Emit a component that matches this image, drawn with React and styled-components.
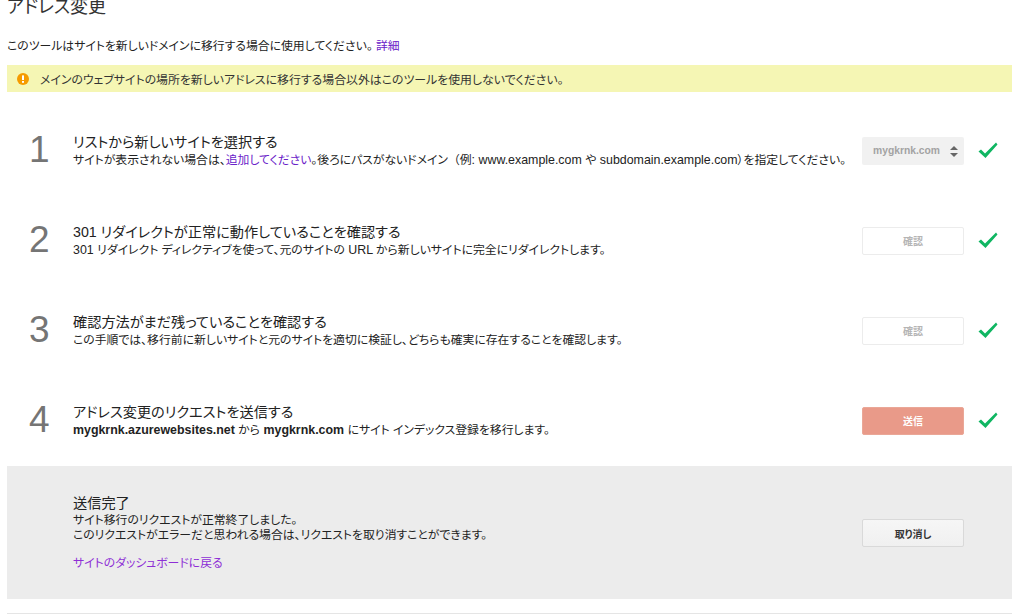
import React from 'react';
import styled, { createGlobalStyle } from 'styled-components';

const GlobalStyle = createGlobalStyle`
  html, body {
    margin: 0;
    padding: 0;
    background: #fff;
    overflow: hidden;
  }
  body {
    font-family: "Liberation Sans", "Noto Sans CJK JP", sans-serif;
    font-feature-settings: "palt";
    color: #222;
  }
`;

const Page = styled.div`
  width: 1024px;
  height: 615px;
  box-sizing: border-box;
  padding: 0 12px 0 7px;
  display: flex;
  flex-direction: column;
  overflow: hidden;
`;

const Title = styled.h1`
  margin: -4px 0 0;
  font-size: 18px;
  line-height: 22px;
  font-weight: 400;
  color: #333;
`;

const Intro = styled.p`
  margin: 20px 0 0;
  font-size: 11.85px;
  line-height: 16px;
`;

const TextLink = styled.a`
  color: #6a22c9;
  text-decoration: none;
`;

const Banner = styled.div`
  margin-top: 11px;
  height: 27px;
  display: flex;
  align-items: center;
  gap: 11px;
  padding-left: 10px;
  background: #f5f6b4;
  font-size: 11.9px;
  color: #333;
`;

const Steps = styled.div`
  margin-top: 13px;
  display: flex;
  flex-direction: column;
`;

const Step = styled.div`
  height: 90px;
  display: grid;
  grid-template-columns: 66px 789px 102px 1fr;
  align-items: center;
`;

const Number = styled.div`
  padding-left: 22px;
  font-size: 37px;
  line-height: 40px;
  color: #757575;
`;

const StepTitle = styled.h2`
  margin: 0 0 2px;
  font-size: 14.2px;
  line-height: 18px;
  font-weight: 400;
  color: #222;
`;

const StepText = styled.p`
  margin: 0;
  font-size: 11.85px;
  line-height: 14px;
  white-space: nowrap;
`;

const Latin = styled.span`
  font-size: 12.4px;
`;

const FullWidth = styled.span`
  font-feature-settings: normal;
`;

const Control = styled.div`
  height: 28px;
  margin-top: 1px;
  box-sizing: border-box;
  display: flex;
  align-items: center;
  justify-content: center;
  border-radius: 2px;
  font-size: 10px;
  font-weight: 700;
`;

const Picker = styled(Control)`
  position: relative;
  background: #f1f1f1;
  color: #a3a3a3;
  padding-right: 13px;
  font-size: 10.3px;
`;

const Arrows = styled.svg`
  position: absolute;
  right: 6px;
  top: 9px;
  width: 8px;
  height: 11px;
`;

const DisabledButton = styled(Control)`
  background: #fff;
  border: 1px solid #ececec;
  color: #b5b5b5;
`;

const SendButton = styled(Control)`
  background: #e99a89;
  border: 1px solid #eaa797;
  color: #fff;
`;

const CancelButton = styled(Control)`
  background: linear-gradient(#f6f6f6, #f0f0f0);
  border: 1px solid #d9d9d9;
  color: #333;
`;

const Check = styled.svg`
  justify-self: start;
  margin-left: 14px;
  margin-top: 1px;
  width: 20px;
  height: 18px;
`;

const DonePanel = styled.div`
  margin-top: 1px;
  height: 133px;
  box-sizing: border-box;
  padding-left: 66px;
  background: #ececec;
  display: grid;
  grid-template-columns: 789px 102px;
  align-items: center;
`;

const DoneTitle = styled(StepTitle)`
  margin: -1px 0 1px;
`;

const DoneText = styled(StepText)`
  line-height: 15px;
`;

const BackLink = styled(TextLink)`
  display: block;
  margin-top: 13px;
  font-size: 11.85px;
  line-height: 14px;
  color: #8e2fd6;
`;

const Divider = styled.div`
  margin-top: 14px;
  height: 1px;
  background: #e5e5e5;
`;

const WarningIcon = () => (
  <svg width="12" height="12" viewBox="0 0 12 12">
    <circle cx="6" cy="6" r="6" fill="#f59b00" />
    <rect x="5" y="2.4" width="2" height="4.6" fill="#fff" />
    <rect x="5" y="8" width="2" height="1.8" fill="#fff" />
  </svg>
);

const CheckMark = () => (
  <Check viewBox="0 0 20 18">
    <path d="M0.5 9.5 L3 7.5 L7 11.5 L18 0.5 L19.5 2.5 L7.5 16 Z" fill="#0fb662" />
  </Check>
);

const steps = [
  {
    num: 1,
    title: 'リストから新しいサイトを選択する',
    text: (
      <>
        サイトが表示されない場合は、<TextLink href="#">追加してください</TextLink>。後ろにパスがないドメイン<FullWidth>（</FullWidth>例<Latin>: www.example.com </Latin>や<Latin> subdomain.example.com</Latin>）を指定してください。
      </>
    ),
    control: (
      <Picker>
        mygkrnk.com
        <Arrows viewBox="0 0 8 11">
          <path d="M4 0 L8 4 H0 Z M0 7 H8 L4 11 Z" fill="#666" />
        </Arrows>
      </Picker>
    ),
  },
  {
    num: 2,
    title: '301 リダイレクトが正常に動作していることを確認する',
    text: (
      <>
        <Latin>301 </Latin>リダイレクト ディレクティブを使って、元のサイトの<Latin> URL </Latin>から新しいサイトに完全にリダイレクトします。
      </>
    ),
    control: <DisabledButton>確認</DisabledButton>,
  },
  {
    num: 3,
    title: '確認方法がまだ残っていることを確認する',
    text: 'この手順では、移行前に新しいサイトと元のサイトを適切に検証し、どちらも確実に存在することを確認します。',
    control: <DisabledButton>確認</DisabledButton>,
  },
  {
    num: 4,
    title: 'アドレス変更のリクエストを送信する',
    text: (
      <>
        <Latin><b>mygkrnk.azurewebsites.net</b> </Latin>から<Latin> <b>mygkrnk.com</b> </Latin>にサイト インデックス登録を移行します。
      </>
    ),
    control: <SendButton>送信</SendButton>,
  },
];

export default function App() {
  return (
    <Page>
      <GlobalStyle />
      <Title>アドレス変更</Title>
      <Intro>
        このツールはサイトを新しいドメインに移行する場合に使用してください。 <TextLink href="#">詳細</TextLink>
      </Intro>
      <Banner>
        <WarningIcon />
        メインのウェブサイトの場所を新しいアドレスに移行する場合以外はこのツールを使用しないでください。
      </Banner>
      <Steps>
        {steps.map(step => (
          <Step key={step.num}>
            <Number>{step.num}</Number>
            <div>
              <StepTitle>{step.title}</StepTitle>
              <StepText>{step.text}</StepText>
            </div>
            {step.control}
            <CheckMark />
          </Step>
        ))}
      </Steps>
      <DonePanel>
        <div>
          <DoneTitle>送信完了</DoneTitle>
          <DoneText>サイト移行のリクエストが正常終了しました。</DoneText>
          <DoneText>このリクエストがエラーだと思われる場合は、リクエストを取り消すことができます。</DoneText>
          <BackLink href="#">サイトのダッシュボードに戻る</BackLink>
        </div>
        <CancelButton>取り消し</CancelButton>
      </DonePanel>
      <Divider />
    </Page>
  );
}
